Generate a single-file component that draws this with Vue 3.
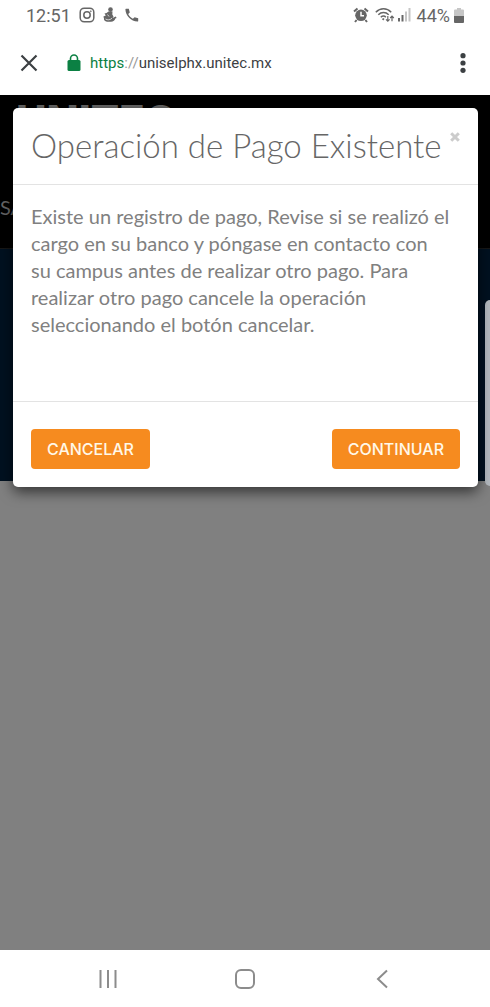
<script setup>
const lines = [
  'Existe un registro de pago, Revise si se realizó el',
  'cargo en su banco y póngase en contacto con',
  'su campus antes de realizar otro pago. Para',
  'realizar otro pago cancele la operación',
  'seleccionando el botón cancelar.',
]
</script>

<template>
  <div class="screen">
    <header class="status">
      <span class="clock">12:51</span>
      <svg class="insta" width="16" height="16" viewBox="0 0 16 16" fill="none" stroke="#666" stroke-width="1.5">
        <rect x="1.2" y="1.2" width="13.6" height="13.6" rx="4" />
        <circle cx="8" cy="8" r="3.2" />
        <circle cx="11.8" cy="4.2" r=".5" fill="#666" stroke-width=".6" />
      </svg>
      <svg class="figure" width="14" height="16" viewBox="0 0 14 16" fill="#666">
        <circle cx="7.500" cy="2.600" r="2.300" />
        <path d="M5.500 4.500h4L9.300 7.500l1.200 2-1 1.500 3.300-1.500.8 1.500-1.300.5c-.3 2-2 3-4.300 3.300H4C1.800 14.300.6 13 1 11.500L.4 9.500l2.400-1L1.500 6.500l2-.5z" />
        <path d="M2.500 12c2 1.200 4.500 1.200 6.500-.8M4.500 7.500l1.500 2" stroke="#fff" stroke-width=".7" fill="none" />
      </svg>
      <svg class="phone" width="14" height="14" viewBox="0 0 14 14" fill="#666">
        <path d="M1 .8h2.800l1 3.600L3.200 6.100c1 2.200 2.500 3.700 4.700 4.700l1.700-1.600 3.600 1v2.800c0 .4-.3.600-.7.600C6 13.300.7 8 .4 1.500.4 1.100.6.800 1 .8z" />
      </svg>
      <span class="gap"></span>
      <svg width="16" height="16" viewBox="0 0 16 16" fill="none" stroke="#666">
        <circle cx="8" cy="8.300" r="5.800" fill="#666" stroke="none" />
        <path d="M1 4.500L4.500 1.500M15 4.500L11.500 1.500M3.600 13L2 15M12.400 13L14 15" stroke-width="2" />
        <path d="M8 4.800v4h3" stroke="#fff" stroke-width="1.500" />
      </svg>
      <svg class="wifi" width="20" height="16" viewBox="0 0 20 16" fill="none" stroke="#666" stroke-width="1.500">
        <path d="M.8 5.200c4.500-4.500 11-4.500 15.400 0M3.300 7.800c3-3 7.400-3 10.400 0M5.800 10.200c1.600-1.500 3.800-1.500 5 0" />
        <path d="M6.800 12l1.700-1 1 1-1.200 1.600z" fill="#666" stroke="none" />
        <path d="M12.800 9v5M11 12.300l1.800 1.900 1.800-1.900M17 14.300v-5M15.200 11L17 9.100l1.800 1.900" stroke-width="1.200" />
      </svg>
      <svg class="signal" width="13" height="14" viewBox="0 0 13 14">
        <path d="M0 10h2v3.500H0zM3.500 7h2v6.500h-2z" fill="#666" />
        <path d="M7 3.500h2v10H7zM10.500 0h2v13.500h-2z" fill="#c6c6c6" />
      </svg>
      <span class="percent">44%</span>
      <svg class="battery" width="10" height="15" viewBox="0 0 10 15">
        <path d="M3 0h4v1.500h2q1 0 1 1V8H0V2.500q0-1 1-1h2z" fill="#c6c6c6" />
        <path d="M0 8h10v6q0 1-1 1H1q-1 0-1-1z" fill="#666" />
      </svg>
    </header>

    <nav class="address" aria-label="Navegador">
      <button class="icon-button" type="button" aria-label="Cerrar pestaña">
        <svg width="18" height="18" viewBox="0 0 18 18" stroke="#3c4043" stroke-width="2.200"><path d="M1.500 1.500l15 15M16.500 1.500l-15 15" /></svg>
      </button>
      <svg class="lock" width="14" height="18" viewBox="0 0 14 18">
        <rect x="0.500" y="6" width="13" height="11" rx="1.500" fill="#0b8043" />
        <path d="M3.500 7V4.500a3.500 3.500 0 0 1 7 0V7" fill="none" stroke="#0b8043" stroke-width="1.600" />
      </svg>
      <span class="url"><span class="secure">https</span><span class="slashes">://</span>uniselphx.unitec.mx</span>
      <button class="icon-button" type="button" aria-label="Menú">
        <svg width="6" height="20" viewBox="0 0 6 20" fill="#3c4043"><circle cx="3" cy="2.700" r="2.600" /><circle cx="3" cy="10" r="2.600" /><circle cx="3" cy="17.300" r="2.600" /></svg>
      </button>
    </nav>

    <main class="page">
      <div class="masthead">
        <div class="brand">UNITEC<span>®</span></div>
        <div class="greeting">SALIR</div>
      </div>
      <div class="banner"></div>
      <div class="edge-handle"></div>

      <section class="dialog" role="dialog" aria-labelledby="dialog-title">
        <header class="dialog-head">
          <h1 id="dialog-title">Operación de Pago Existente</h1>
          <button class="close" type="button" aria-label="Cerrar">
            <svg width="10" height="10" viewBox="0 0 10 10" stroke="#ccc" stroke-width="3"><path d="M1.200 1.200l7.600 7.600M8.800 1.200L1.200 8.800" /></svg>
          </button>
        </header>
        <p class="message">
          <template v-for="(line, i) in lines" :key="i">{{ line }}<br></template>
        </p>
        <footer class="actions">
          <button class="action" type="button">CANCELAR</button>
          <button class="action" type="button">CONTINUAR</button>
        </footer>
      </section>
    </main>

    <nav class="system" aria-label="Sistema">
      <button class="icon-button" type="button" aria-label="Recientes">
        <svg width="20" height="20" viewBox="0 0 20 20" stroke="#8c8c8c" stroke-width="2"><path d="M2.500 1v18M10 1v18M17.500 1v18" /></svg>
      </button>
      <button class="icon-button" type="button" aria-label="Inicio">
        <svg width="20" height="20" viewBox="0 0 20 20" fill="none" stroke="#8c8c8c" stroke-width="2"><rect x="1" y="1" width="18" height="18" rx="5" /></svg>
      </button>
      <button class="icon-button" type="button" aria-label="Atrás">
        <svg width="20" height="20" viewBox="0 0 20 20" fill="none" stroke="#8c8c8c" stroke-width="2"><path d="M15 1.500L6 10l9 8.500" /></svg>
      </button>
    </nav>
  </div>
</template>

<style>
body { margin: 0; }
</style>

<style scoped>
* { box-sizing: border-box; }
button { font: inherit; border: 0; padding: 0; background: none; cursor: pointer; }
svg { display: block; flex: none; }
.screen { min-height: 100vh; display: flex; flex-direction: column; background: #fff; font-family: Roboto, sans-serif; }
.status { height: 30px; padding: 0 26px; display: flex; align-items: center; color: #666; font-size: 18px; }
.clock { margin-right: 8px; }
.figure { margin-left: 8px; }
.phone { margin-left: 8px; }
.gap { flex: 1; }
.wifi { margin-left: 6px; }
.signal { margin-left: 3px; }
.percent { margin-left: 6px; }
.battery { margin-left: 4px; }
.address { height: 65px; padding: 0 24px 0 20px; display: flex; align-items: center; }
.icon-button { display: flex; }
.lock { margin-left: 29px; }
.url { flex: 1; margin-left: 9px; color: #3c4043; font-size: 15px; }
.secure { color: #0b8043; }
.slashes { color: #999; }
.page { flex: 1; position: relative; background: #808080; overflow: hidden; }
.masthead { height: 154px; padding: 6px 0 0; background: #000; border-bottom: 1px solid #171717; color: #666; font-family: Inter, sans-serif; }
.brand { height: 94px; padding-left: 16px; font-size: 42px; line-height: 40px; font-weight: 800; }
.brand span { font-size: 16px; vertical-align: top; }
.greeting { font-family: Lato, sans-serif; font-size: 20px; line-height: 24px; }
.banner { height: 232px; background: #001120; }
.edge-handle { position: absolute; top: 205px; right: 0; width: 5px; height: 186px; border-radius: 5px 0 0 5px; background: #b3b9bf; }
.dialog { position: absolute; top: 13px; left: 13px; right: 12px; background: #fff; border-radius: 5px; box-shadow: 0 5px 14px rgba(0, 0, 0, .6); color: #808080; font-family: Lato, sans-serif; }
.dialog-head { height: 77px; padding: 0 18px; display: flex; align-items: flex-start; justify-content: space-between; border-bottom: 1px solid #e3e3e3; }
h1 { margin: 0; color: #666; font-size: 33px; line-height: 74px; font-weight: 300; white-space: nowrap; }
.close { margin-top: 24px; }
.message { min-height: 216px; margin: 0; padding: 18px 18px 60px; font-size: 20px; line-height: 27px; white-space: nowrap; }
.actions { padding: 27px 18px 18px; display: flex; justify-content: space-between; border-top: 1px solid #e3e3e3; }
.action { height: 40px; padding: 0 16px; border-radius: 4px; background: #f68b1f; color: #fff8e8; font-family: Inter, sans-serif; font-size: 16px; font-weight: 500; }
.system { height: 57px; padding: 0 98px; display: flex; align-items: center; justify-content: space-between; }
</style>
